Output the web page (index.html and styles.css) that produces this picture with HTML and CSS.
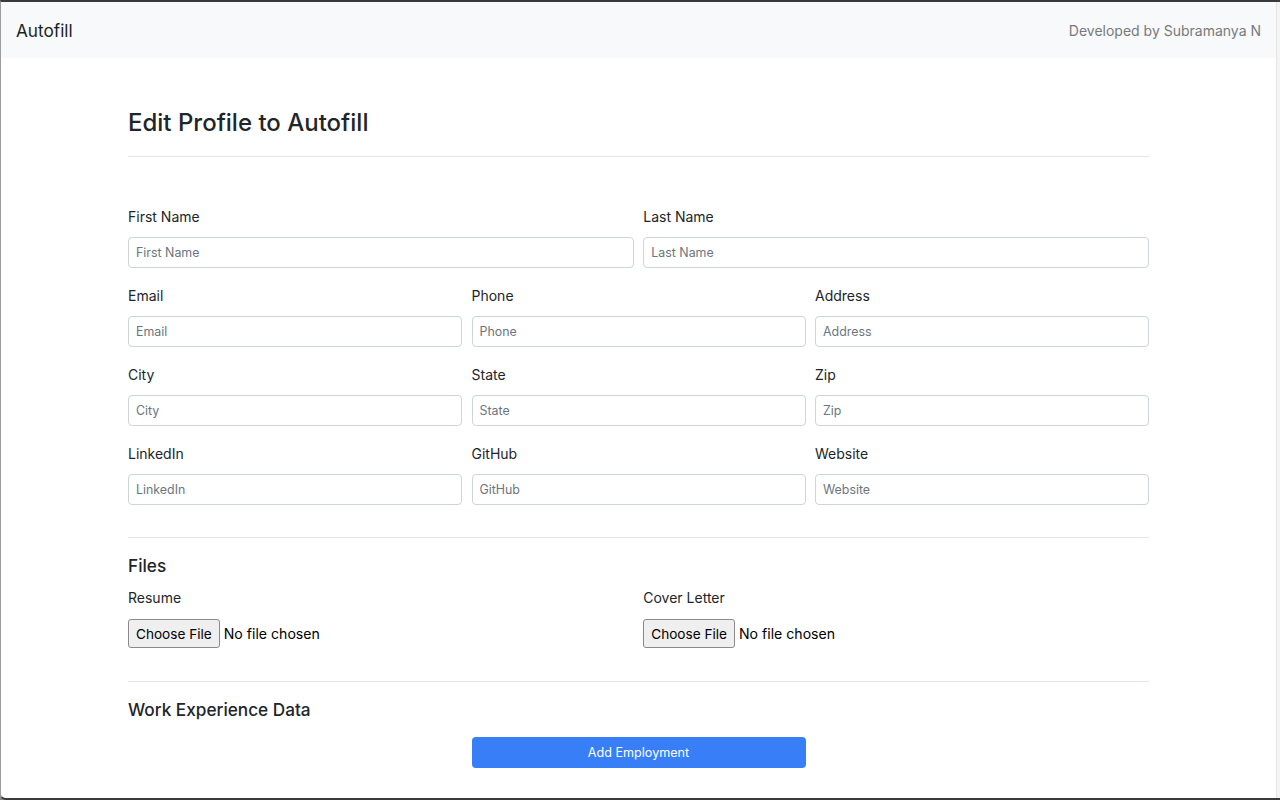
FILE: index.html
```html
<!DOCTYPE html>
<html lang="en">
<head>
<meta charset="utf-8">
<title>Autofill</title>
<link rel="stylesheet" href="styles.css">
</head>
<body>
<div class="window">
  <div class="page">
    <header class="navbar">
      <span class="brand">Autofill</span>
      <span class="credit">Developed by Subramanya N</span>
    </header>
    <main class="content">
      <h3 class="title">Edit Profile to Autofill</h3>
      <hr class="divider divider-top">
      <form class="profile">
        <div class="grid grid-2">
          <div class="field"><label>First Name</label><input class="input" placeholder="First Name"></div>
          <div class="field"><label>Last Name</label><input class="input" placeholder="Last Name"></div>
        </div>
        <div class="grid grid-3">
          <div class="field"><label>Email</label><input class="input" placeholder="Email"></div>
          <div class="field"><label>Phone</label><input class="input" placeholder="Phone"></div>
          <div class="field"><label>Address</label><input class="input" placeholder="Address"></div>
        </div>
        <div class="grid grid-3">
          <div class="field"><label>City</label><input class="input" placeholder="City"></div>
          <div class="field"><label>State</label><input class="input" placeholder="State"></div>
          <div class="field"><label>Zip</label><input class="input" placeholder="Zip"></div>
        </div>
        <div class="grid grid-3">
          <div class="field"><label>LinkedIn</label><input class="input" placeholder="LinkedIn"></div>
          <div class="field"><label>GitHub</label><input class="input" placeholder="GitHub"></div>
          <div class="field"><label>Website</label><input class="input" placeholder="Website"></div>
        </div>
        <hr class="divider divider-section">
        <h5 class="section-title">Files</h5>
        <div class="grid grid-2 files">
          <div class="field">
            <label class="file-label">Resume</label>
            <div class="file-row"><button type="button" class="file-btn">Choose File</button><span class="file-name">No file chosen</span></div>
          </div>
          <div class="field">
            <label class="file-label">Cover Letter</label>
            <div class="file-row"><button type="button" class="file-btn">Choose File</button><span class="file-name">No file chosen</span></div>
          </div>
        </div>
        <hr class="divider divider-files">
        <h5 class="section-title">Work Experience Data</h5>
        <div class="grid grid-3 actions">
          <button type="button" class="btn-primary">Add Employment</button>
        </div>
      </form>
    </main>
  </div>
  <div class="scrollbar"></div>
</div>
</body>
</html>
```
FILE: styles.css
```css
* { box-sizing: border-box; }
html, body { margin: 0; padding: 0; }
body {
  background: #8a8a8a;
  font-family: Inter, "Liberation Sans", sans-serif;
  color: #212529;
}
.window {
  height: 800px;
  display: flex;
  background: #fff;
  border-top: 2px solid #3b3b3b;
  border-left: 1px solid #9c9c9c;
  border-bottom: 2px solid #3b3b3b;
  border-bottom-left-radius: 6px;
  overflow: hidden;
}
.page { flex: 1; display: flex; flex-direction: column; min-width: 0; }
.scrollbar {
  width: 4px;
  background: #f4f4f4;
  border-left: 1px solid #e6e6e6;
}
.navbar {
  height: 56px;
  background: #f8f9fa;
  display: flex;
  align-items: center;
  justify-content: space-between;
  padding: 0 15px;
}
.brand { font-size: 17.2px; color: #1d1f21; }
.credit { font-size: 14px; color: #777a7c; }
.content { width: 1021px; margin: 0 auto; padding-top: 48px; }
.title {
  margin: 0;
  font-size: 24px;
  line-height: 34px;
  font-weight: 500;
}
.divider {
  margin: 16px 0;
  border: 0;
  border-top: 1px solid #e4e5e6;
  height: 0;
}
.divider-top { margin-bottom: 48px; }
.divider-section { margin-top: 32px; }
.divider-files { margin-top: 33px; }
.profile { margin: 0; }
.grid { display: grid; column-gap: 9.5px; margin-bottom: 16px; }
.grid-2 { grid-template-columns: 1fr 1fr; }
.grid-3 { grid-template-columns: 1fr 1fr 1fr; }
.field label {
  display: block;
  font-size: 14px;
  line-height: 24px;
  margin-bottom: 8px;
}
.input {
  display: block;
  width: 100%;
  height: 31px;
  padding: 0 7px;
  border: 1px solid #ced4da;
  border-radius: 4px;
  font-family: Inter, "Liberation Sans", sans-serif;
  font-size: 12.4px;
  color: #212529;
  background: #fff;
}
.input::placeholder { color: #6c757d; }
.section-title {
  margin: 0 0 8px;
  font-size: 17.2px;
  line-height: 24px;
  font-weight: 500;
}
.field .file-label { margin-bottom: 9px; }
.files { margin-bottom: 17px; }
.file-row { display: flex; align-items: center; gap: 4px; height: 29px; }
.file-btn {
  height: 29px;
  padding: 0 7px;
  background: #efefef;
  border: 1px solid #8a8a8a;
  border-radius: 3px;
  font-family: Inter, "Liberation Sans", sans-serif;
  font-size: 13.6px;
  color: #000;
}
.file-name { font-size: 14.1px; color: #000; }
.actions { margin-top: 15px; }
.btn-primary {
  grid-column: 2;
  height: 31px;
  border: 0;
  border-radius: 4px;
  background: #387ef6;
  color: #fff;
  font-family: Inter, "Liberation Sans", sans-serif;
  font-size: 12.6px;
}
```
